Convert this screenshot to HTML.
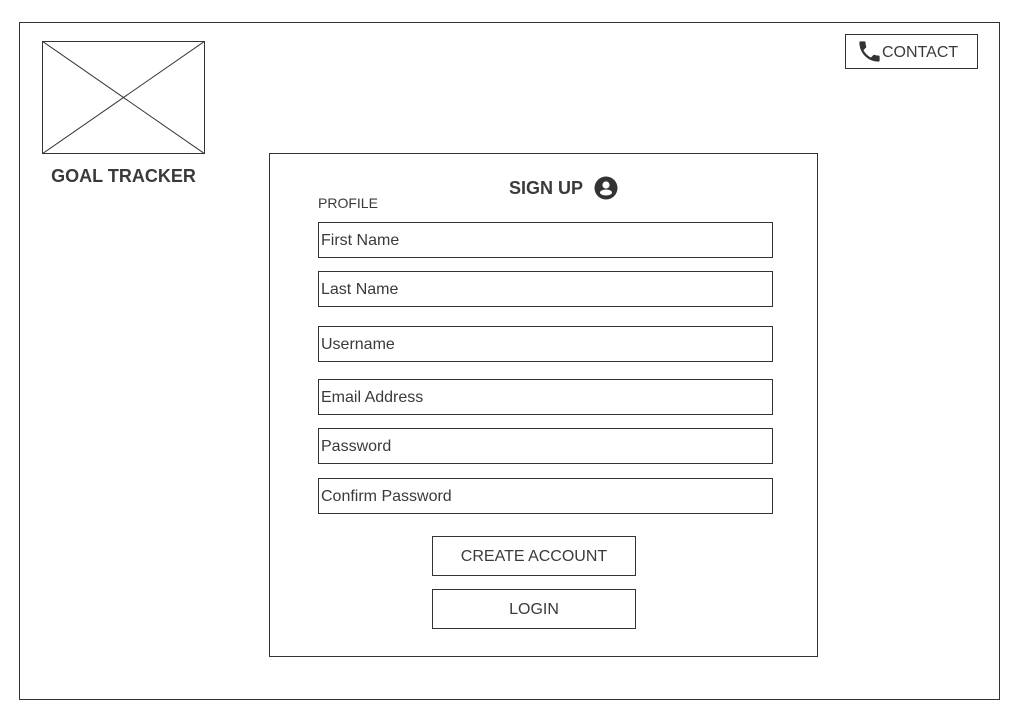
<!DOCTYPE html>
<html><head><style>
body{margin:0;width:1024px;height:728px;background:#fff;font-family:"Liberation Sans",sans-serif;color:#3a3a3a;position:relative;overflow:hidden}
.a{position:absolute;box-sizing:border-box}
.b{border:1px solid #333}
.f{position:absolute;left:318px;width:455px;height:36px;border:1px solid #333;box-sizing:border-box;font-size:16px;line-height:36px;padding-left:2px}
.btn{position:absolute;left:432px;width:204px;height:40px;border:1px solid #333;box-sizing:border-box;font-size:16px;line-height:40px;text-align:center}
</style></head><body>
<div class="a b" style="left:19px;top:22px;width:981px;height:678px"></div>
<svg class="a" style="left:42px;top:41px" width="163" height="113"><rect x="0.5" y="0.5" width="162" height="112" fill="none" stroke="#333"/><line x1="0" y1="0" x2="163" y2="113" stroke="#333"/><line x1="163" y1="0" x2="0" y2="113" stroke="#333"/></svg>
<div class="a" style="left:42px;top:166px;width:163px;text-align:center;font-weight:bold;font-size:18px">GOAL TRACKER</div>
<div class="a b" style="left:845px;top:34px;width:133px;height:35px"></div>
<svg class="a" style="left:856px;top:38px" width="27" height="27" viewBox="0 0 24 24"><path fill="#333" d="M6.6 10.8c1.4 2.8 3.8 5.1 6.6 6.6l2.2-2.2c.3-.3.7-.4 1-.2 1.1.4 2.3.6 3.6.6.6 0 1 .4 1 1V20c0 .6-.4 1-1 1C10.6 21 3 13.4 3 4c0-.6.4-1 1-1h3.5c.6 0 1 .4 1 1 0 1.3.2 2.5.6 3.6.1.3 0 .7-.2 1L6.6 10.8z"/></svg>
<div class="a" style="left:882px;top:44px;font-size:16px">CONTACT</div>
<div class="a b" style="left:269px;top:153px;width:549px;height:504px"></div>
<div class="a" style="left:509px;top:178px;font-size:18px;font-weight:bold">SIGN UP</div>
<svg class="a" style="left:594px;top:176px" width="24" height="24" viewBox="0 0 24 24"><circle cx="12" cy="12" r="11.5" fill="#333"/><circle cx="12" cy="9" r="3.6" fill="#fff"/><ellipse cx="12" cy="16.5" rx="6" ry="3" fill="#fff"/></svg>
<div class="a" style="left:318px;top:195px;font-size:14px">PROFILE</div>
<div class="f" style="top:222px">First Name</div>
<div class="f" style="top:271px">Last Name</div>
<div class="f" style="top:326px">Username</div>
<div class="f" style="top:379px">Email Address</div>
<div class="f" style="top:428px">Password</div>
<div class="f" style="top:478px">Confirm Password</div>
<div class="btn" style="top:536px">CREATE ACCOUNT</div>
<div class="btn" style="top:589px">LOGIN</div>
</body></html>
